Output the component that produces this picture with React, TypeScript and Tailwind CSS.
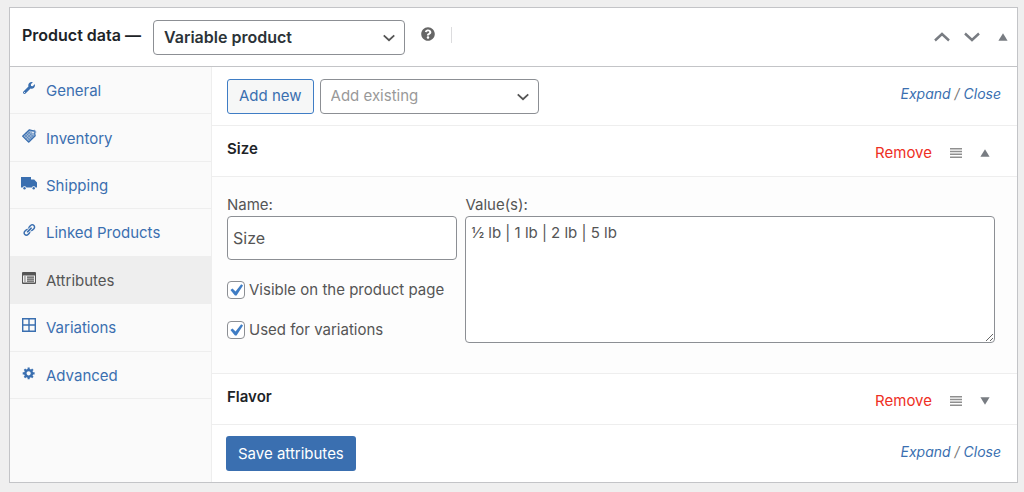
import React from "react";
import { FaWrench, FaQuestionCircle } from "react-icons/fa";

const icons = {
  general: <FaWrench className="size-3" />,
  inventory: (
    <svg viewBox="0 0 16 16" className="size-4" fill="none" stroke="currentColor">
      <path d="M8.4 1.8L13.2 3 14.2 7.8 7.6 14.2 1.6 8.2z" fill="currentColor" fillOpacity="0.5" strokeWidth="1.2" strokeLinejoin="round" />
      <path d="M3.2 9.8l6-6M4.8 11.4l6-6M6.4 13l6-6M3.4 6.4l6 6M5 4.8l6 6M6.6 3.2l6 6" strokeWidth="0.5" />
      <circle cx="12" cy="4.4" r="1.3" fill="#fafafa" strokeWidth="0.4" />
      <path d="M12 4.2C12.4 1.4 15.4 1.8 14.6 5.2" strokeWidth="0.7" />
    </svg>
  ),
  shipping: (
    <svg viewBox="0 0 16 14" className="h-3.5 w-4" fill="currentColor">
      <path d="M0 1h10v2.6h3.2L16 6.6V11.6h-1.4a2 2 0 0 0-3.8 0H5.4a2 2 0 0 0-3.8 0H0z" />
      <circle cx="3.5" cy="12.2" r="1.2" />
      <circle cx="12.7" cy="12.2" r="1.2" />
    </svg>
  ),
  linked: (
    <svg viewBox="0 0 20 20" className="size-3.5" fill="currentColor">
      <path d="M17.74 2.76c1.68 1.69 1.68 4.41 0 6.1l-1.53 1.52c-1.12 1.12-2.7 1.47-4.14 1.09l2.62-2.61.76-.77.76-.76c.84-.84.84-2.2 0-3.04-.84-.85-2.2-.85-3.04 0l-.77.76-3.38 3.38c-.37-1.44-.02-3.02 1.1-4.14l1.52-1.53c1.69-1.68 4.42-1.68 6.1 0zM8.59 13.43l5.34-5.34c.42-.42.42-1.1 0-1.52-.44-.43-1.13-.39-1.53 0l-5.33 5.34c-.42.42-.42 1.1 0 1.52.44.43 1.13.39 1.52 0zm-.76 2.29l4.14-4.15c.38 1.44.03 3.02-1.09 4.14l-1.52 1.53c-1.69 1.68-4.41 1.68-6.1 0-1.68-1.68-1.68-4.42 0-6.1l1.53-1.52c1.12-1.12 2.7-1.47 4.14-1.1l-4.14 4.15c-.85.84-.85 2.2 0 3.05.84.84 2.2.84 3.04 0z" />
    </svg>
  ),
  attributes: (
    <svg viewBox="0 0 14 14" className="size-3.5" fill="currentColor" fillRule="evenodd">
      <path d="M1 1h12a1 1 0 0 1 1 1v10a1 1 0 0 1-1 1H1a1 1 0 0 1-1-1V2a1 1 0 0 1 1-1zM1 4.6v7h12v-7z" />
      <path d="M2.2 5.6h1.5v1H2.2zM2.2 7.6h1.5v1H2.2zM2.2 9.6h1.5v1H2.2zM5 5.4h7v1.4H5zM5 7.4h7v1.4H5zM5 9.4h7v1.4H5z" />
    </svg>
  ),
  variations: (
    <svg viewBox="0 0 14 14" className="size-3.5" fill="none" stroke="currentColor" strokeWidth="1.4">
      <path d="M0.7 0.7h12.6v12.6H0.7zM7 0.7v12.6M0.7 7h12.6" />
    </svg>
  ),
  advanced: (
    <svg viewBox="0 0 20 20" className="size-3.5" fill="currentColor">
      <path d="M18 12h-2.18c-.17.7-.44 1.35-.81 1.93l1.54 1.54-2.1 2.1-1.54-1.54c-.58.36-1.23.63-1.91.79V19H8v-2.18c-.68-.16-1.33-.43-1.91-.79l-1.54 1.54-2.12-2.12 1.54-1.54c-.36-.58-.63-1.23-.79-1.91H1V9.03h2.17c.16-.7.44-1.35.8-1.94L2.43 5.55l2.1-2.1 1.54 1.54c.58-.37 1.24-.64 1.93-.81V2h3v2.18c.68.16 1.33.43 1.91.79l1.54-1.54 2.12 2.12-1.54 1.54c.36.59.64 1.24.8 1.94H18V12zm-8.5 1.5c1.66 0 3-1.34 3-3s-1.34-3-3-3-3 1.34-3 3 1.34 3 3 3z" />
    </svg>
  ),
};

const tabs = [
  { label: "General", icon: icons.general },
  { label: "Inventory", icon: icons.inventory },
  { label: "Shipping", icon: icons.shipping },
  { label: "Linked Products", icon: icons.linked },
  { label: "Attributes", icon: icons.attributes, active: true },
  { label: "Variations", icon: icons.variations },
  { label: "Advanced", icon: icons.advanced },
];

function Chevron({ up = false, className = "" }: { up?: boolean; className?: string }) {
  return (
    <svg viewBox="0 0 16 10" className={className} fill="none" stroke="currentColor" strokeWidth="2.4">
      <path d={up ? "M1 8.5l7-6.5 7 6.5" : "M1 1.5l7 6.5 7-6.5"} />
    </svg>
  );
}

function Triangle({ up = false }: { up?: boolean }) {
  return (
    <svg viewBox="0 0 10 8" className="h-2 w-2.5" fill="#787c82">
      <path d={up ? "M5 0.3L9.6 7.7H0.4z" : "M5 7.7L9.6 0.3H0.4z"} />
    </svg>
  );
}

function ExpandClose() {
  return (
    <span className="mb-1 ml-auto text-sm text-[#777] italic">
      <a href="#expand" className="text-[#3a6fb0]">Expand</a> / <a href="#close" className="text-[#3a6fb0]">Close</a>
    </span>
  );
}

function AttributeHeader({ name, open = false }: { name: string; open?: boolean }) {
  return (
    <div className="flex h-[50px] items-center bg-white pr-[27px] pl-[15px]">
      <h3 className="pb-1 font-semibold text-[#1d2327]">{name}</h3>
      <a href="#remove" className="mt-1 ml-auto text-[#ee2f24]">Remove</a>
      <svg viewBox="0 0 12 10" className="mt-1 ml-[18px] h-2.5 w-3" fill="#8f8f8f">
        <path d="M0 0h12v1.5H0zM0 2.8h12v1.5H0zM0 5.6h12v1.5H0zM0 8.4h12v1.5H0z" />
      </svg>
      <button type="button" aria-label={"Toggle " + name} className="mt-1 ml-[18px]">
        <Triangle up={open} />
      </button>
    </div>
  );
}

function Checkbox({ label }: { label: string }) {
  return (
    <label className="flex items-center gap-1">
      <span className="relative size-[18px] shrink-0">
        <input type="checkbox" defaultChecked className="peer block size-full appearance-none rounded border border-[#8c8f94] bg-white" />
        <svg viewBox="0 0 19 19" className="pointer-events-none absolute inset-0 hidden size-full peer-checked:block" fill="#3f7dc5">
          <path d="M15 3.4l1.9 1.4-6.8 10.5H8.4L3.6 9.6l2.2-1.7 3.2 3.1z" />
        </svg>
      </span>
      {label}
    </label>
  );
}

export default function App() {
  return (
    <div className="min-h-screen bg-[#efefef] pt-[7px] pr-1.5 pb-2 pl-[9px] font-['Inter',sans-serif] text-[15px] leading-5 text-[#555]">
      <div className="border border-[#c3c4c7] bg-white">
        <header className="flex h-[59px] items-center border-b border-[#c3c4c7] pr-[9px] pl-3">
          <label htmlFor="product-type" className="pb-1 text-base font-semibold text-[#1d2327]">Product data —</label>
          <div className="relative ml-3 w-[252px]">
            <select id="product-type" className="block h-[35px] w-full appearance-none rounded border border-[#8c8f94] bg-white pl-2.5 text-base font-semibold text-[#2c3338]">
              <option>Variable product</option>
            </select>
            <Chevron className="pointer-events-none absolute top-3.5 right-2.5 h-2 w-3 text-[#555]" />
          </div>
          <FaQuestionCircle className="mb-1.5 ml-4 size-3.5 text-[#666]" />
          <span className="mb-1 ml-4 h-4 border-l border-[#dcdcde]" />
          <div className="ml-auto flex items-center text-[#787c82]">
            <button type="button" aria-label="Move up"><Chevron up className="h-2.5 w-4" /></button>
            <button type="button" aria-label="Move down" className="ml-3.5"><Chevron className="h-2.5 w-4" /></button>
            <button type="button" aria-label="Toggle panel" className="ml-[18px]"><Triangle up /></button>
          </div>
        </header>

        <div className="flex">
          <nav className="w-[202px] shrink-0 border-r border-[#eee] bg-[#fafafa]">
            <ul className="grid h-[332px] grid-rows-7">
              {tabs.map((tab) => (
                <li key={tab.label} className={tab.active ? "border-b border-[#eee] bg-[#eee] text-[#555]" : "border-b border-[#eee] text-[#3a6fb0]"}>
                  <a href="#tab" className="flex h-full items-center gap-[9px] pt-0.5 pl-[11px]">
                    <span className="flex w-4 justify-center pb-1.5">{tab.icon}</span>
                    {tab.label}
                  </a>
                </li>
              ))}
            </ul>
          </nav>

          <main className="min-w-0 flex-1">
            <div className="flex h-[59px] items-center gap-1.5 border-b border-[#eee] pr-4 pl-[15px]">
              <button type="button" className="h-[35px] rounded-[3px] border border-[#3f7dc5] bg-[#f6f7f7] px-[11px] text-[#3a6fb0]">Add new</button>
              <div className="relative w-[219px]">
                <select aria-label="Add existing" className="block h-[35px] w-full appearance-none rounded border border-[#8c8f94] bg-white pl-2.5 text-[#999]">
                  <option>Add existing</option>
                </select>
                <Chevron className="pointer-events-none absolute top-3.5 right-2.5 h-2 w-3 text-[#555]" />
              </div>
              <ExpandClose />
            </div>

            <AttributeHeader name="Size" open />
            <div className="flex gap-2 border-y border-[#eee] bg-[#fdfdfd] pt-[18px] pr-[22px] pb-[30px] pl-[15px]">
              <div className="w-[30%]">
                <label htmlFor="attr-name" className="block">Name:</label>
                <input id="attr-name" type="text" defaultValue="Size" className="mt-px mb-5 block h-11 w-full rounded border border-[#8c8f94] bg-white px-[5px] text-base" />
                <div className="space-y-5">
                  <Checkbox label="Visible on the product page" />
                  <Checkbox label="Used for variations" />
                </div>
              </div>
              <div className="flex-1">
                <label htmlFor="attr-values" className="block">Value(s):</label>
                <textarea id="attr-values" defaultValue="½ lb | 1 lb | 2 lb | 5 lb" className="mt-px block h-[127px] w-full rounded border border-[#8c8f94] bg-white px-[5px] py-1.5" />
              </div>
            </div>
            <AttributeHeader name="Flavor" />

            <div className="flex h-[58px] items-center border-t border-[#eee] pr-4 pl-3.5">
              <button type="button" className="h-[35px] rounded-[3px] bg-[#3a6fb0] px-3 text-white">Save attributes</button>
              <ExpandClose />
            </div>
          </main>
        </div>
      </div>
    </div>
  );
}
